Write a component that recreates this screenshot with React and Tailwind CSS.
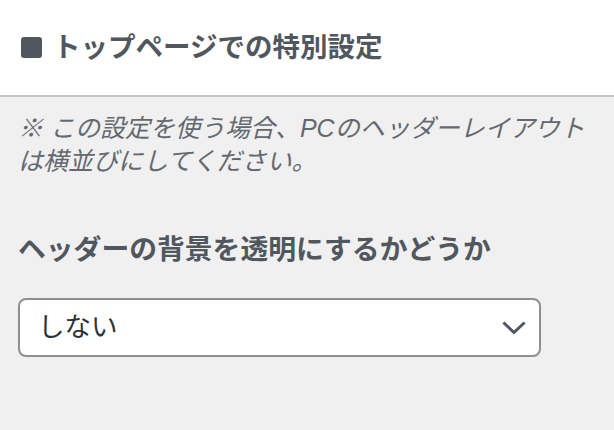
import React from "react";

export default function App() {
  return (
    <div className="w-[614px] h-[430px] bg-[#f0f0f1] overflow-hidden" style={{ fontFamily: '"Liberation Sans", "Noto Sans CJK JP", sans-serif' }}>
      <div className="h-[97px] bg-white border-b-2 border-[#c3c4c7] flex items-center pl-[21px] gap-[11px]">
        <div className="w-[21px] h-[21px] rounded-[3px] bg-[#50575e]" />
        <h2 className="text-[27.5px] leading-[33px] font-bold text-[#50575e]">トップページでの特別設定</h2>
      </div>
      <div className="pl-[18px] pr-[18px] pt-[15px]">
        <p className="italic text-[25px] leading-[33px] text-[#646970]">※ この設定を使う場合、PCのヘッダーレイアウトは横並びにしてください。</p>
        <p className="mt-[55px] text-[27.8px] leading-[33px] font-bold text-[#50575e]">ヘッダーの背景を透明にするかどうか</p>
        <div className="mt-[32px] w-[523px] h-[59px] bg-white border-2 border-[#8c8f94] rounded-[8px] flex items-center justify-between pl-[18px] pr-[13px]">
          <span className="text-[26.5px] text-[#2c3338]">しない</span>
          <svg width="24" height="14" viewBox="0 0 24 14" fill="none">
            <polyline points="2.5,2.5 12,11.5 21.5,2.5" stroke="#50575e" strokeWidth="3" strokeLinecap="square" />
          </svg>
        </div>
      </div>
    </div>
  );
}
